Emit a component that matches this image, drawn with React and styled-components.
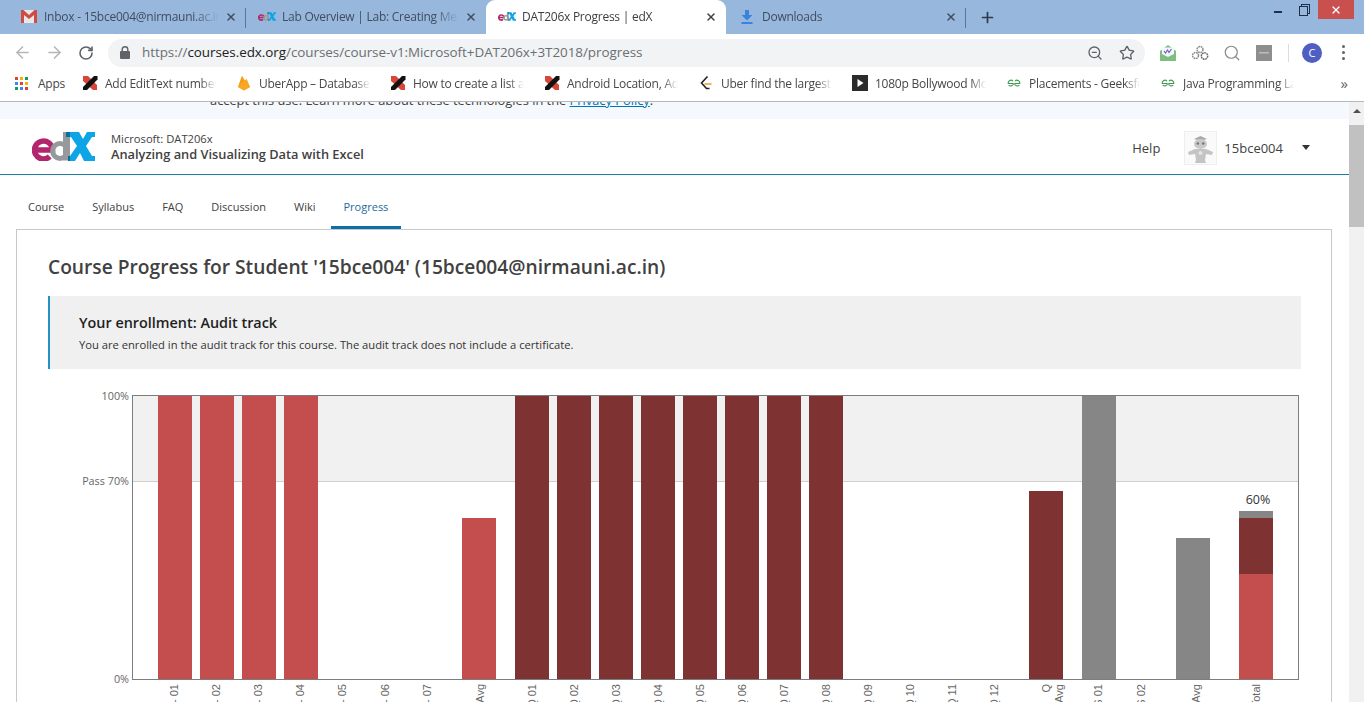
import React from 'react';
import styled, { createGlobalStyle } from 'styled-components';
import { ArrowLeft, ArrowRight, RotateCw, ZoomOut, Star, Plus, X, Search } from 'lucide-react';

const Global = createGlobalStyle`
  html, body { margin: 0; padding: 0; height: 100%; overflow: hidden; background: #fff; }
  * { box-sizing: border-box; }
`

const Window = styled.div`
  width: 1364px;
  height: 702px;
  display: flex;
  flex-direction: column;
  overflow: hidden;
  font-family: "Open Sans", "Noto Sans", sans-serif;
`

/* browser chrome */
const TabStrip = styled.div`
  height: 34px;
  flex: none;
  background: #97b7dc;
  display: flex;
  padding-left: 6px;
  position: relative;
`
const Tab = styled.div`
  width: 240px;
  height: 34px;
  display: flex;
  align-items: center;
  gap: 6px;
  padding: 0 10px 1px ${p => p.$inset || 12}px;
  background: ${p => p.$active ? '#fff' : 'transparent'};
  border-radius: 9px 9px 0 0;
  color: ${p => p.$active ? '#3c4043' : '#414d5e'};
  position: relative;
  &::after {
    content: '';
    display: ${p => p.$sep ? 'block' : 'none'};
    position: absolute;
    right: 0;
    top: 8px;
    height: 20px;
    width: 1px;
    background: #5f7690;
  }
`
const TabIcon = styled.span`
  width: 18px;
  height: 18px;
  flex: none;
  display: flex;
  align-items: center;
  justify-content: center;
`
const FadeText = styled.span`
  flex: 1;
  min-width: 0;
  white-space: nowrap;
  overflow: hidden;
  font-size: 12px;
  font-family: "Open Sans", sans-serif;
  letter-spacing: -0.25px;
  -webkit-mask-image: linear-gradient(to right, #000 86%, transparent 100%);
  mask-image: linear-gradient(to right, #000 86%, transparent 100%);
`
const TabClose = styled(X)`
  flex: none;
  width: 12px;
  height: 12px;
  margin-right: -1px;
  stroke-width: 3;
`
const NewTab = styled.div`
  width: 42px;
  display: flex;
  align-items: center;
  justify-content: center;
  color: #2f3b4c;
`
const WindowControls = styled.div`
  margin-left: auto;
  display: flex;
  align-items: flex-start;
  padding-right: 10px;
`
const MinButton = styled.div`
  width: 8px;
  height: 2px;
  background: #1f2f49;
  margin: 11px 17px 0 0;
`
const RestoreButton = styled.div`
  width: 9px;
  height: 10px;
  margin: 6px 10px 0 0;
  border: 1px solid #1f2f49;
  box-shadow: 2px -2px 0 -1px #97b7dc, 2px -2px 0 0 #1f2f49;
`
const CloseButton = styled.div`
  width: 36px;
  height: 19px;
  background: #c8504f;
  color: #fff;
  display: flex;
  align-items: center;
  justify-content: center;
`
const Toolbar = styled.div`
  height: 33px;
  flex: none;
  background: #fff;
  display: flex;
  align-items: center;
  padding-top: 4px;
`
const NavButton = styled.div`
  width: 32px;
  display: flex;
  justify-content: center;
  color: ${p => p.$on ? '#5f6368' : '#b4b6b9'};
  margin-left: ${p => p.$first ? '6px' : 0};
`
const Omnibox = styled.div`
  width: 1037px;
  height: 28px;
  margin-left: 6px;
  background: #f1f3f4;
  border-radius: 14px;
  display: flex;
  align-items: center;
  padding: 0 2px 0 12px;
  color: #5f6368;
`
const Url = styled.div`
  flex: 1;
  margin: 0 0 1px 12px;
  font-size: 13.45px;
  letter-spacing: -0.05px;
  color: #6b6f73;
  white-space: nowrap;
  b { font-weight: 400; color: #202124; }
`
const OmniIcon = styled.div`
  width: 32px;
  display: flex;
  justify-content: center;
  color: #5f6368;
`
const ExtensionBar = styled.div`
  display: flex;
  align-items: center;
  margin-left: 7px;
`
const Ext = styled.div`
  width: 32px;
  display: flex;
  justify-content: center;
`
const ExtSep = styled.div`
  width: 1px;
  height: 18px;
  background: #dadce0;
  margin: 0 7px 0 8px;
`
const Avatar = styled.div`
  width: 20px;
  height: 20px;
  border-radius: 50%;
  background: #4f5fc1;
  color: #fff;
  font-size: 11px;
  display: flex;
  align-items: center;
  justify-content: center;
  margin: 0 11px 0 6px;
`
const Dots = styled.div`
  display: flex;
  flex-direction: column;
  gap: 3px;
  margin-left: 9px;
  span { width: 3px; height: 3px; border-radius: 50%; background: #5f6368; }
`
const Bookmarks = styled.div`
  height: 35px;
  flex: none;
  background: #fff;
  border-bottom: 1px solid #b7b7b7;
  display: flex;
  align-items: center;
  padding: 0 0 2px 15px;
  position: relative;
  color: #474747;
`
const Apps = styled.div`
  width: 67px;
  display: flex;
  align-items: center;
  gap: 10px;
  font-size: 12px;
  letter-spacing: -0.25px;
`
const AppGrid = styled.div`
  width: 13px;
  display: grid;
  grid-template-columns: repeat(3, 3px);
  gap: 2px;
`
const AppDot = styled.i`
  width: 3px;
  height: 3px;
  background: ${p => p.$c};
`
const Bookmark = styled.div`
  width: 154px;
  display: flex;
  align-items: center;
  gap: 7px;
  padding-right: 20px;
  flex: none;
`
const BookmarkIcon = styled.span`
  width: 16px;
  height: 16px;
  flex: none;
  display: flex;
`
const More = styled.div`
  margin-left: auto;
  margin-right: 16px;
  font-size: 15px;
  color: #5f6368;
`

/* page */
const Viewport = styled.div`
  flex: 1;
  min-height: 0;
  display: flex;
`
const Page = styled.div`
  flex: 1;
  min-width: 0;
  background: #fff;
  overflow: hidden;
`
const CookieBar = styled.div`
  height: 17px;
  background: #f5f8fd;
  overflow: hidden;
  padding-left: 210px;
  font-size: 12.83px;
  line-height: 18px;
  color: #414141;
  p { margin: -11px 0 0; }
  a { color: #0075b4; text-decoration: underline; }
`
const Header = styled.header`
  height: 56px;
  display: flex;
  align-items: center;
  padding: 0 39px 0 32px;
  border-bottom: 1px solid #1f7ca5;
`
const CourseInfo = styled.div`
  margin-left: 16px;
  color: #414141;
`
const Org = styled.div`
  font-size: 11.2px;
  line-height: 15px;
`
const CourseName = styled.div`
  font-size: 12.8px;
  line-height: 17px;
  font-weight: 600;
`
const HeaderRight = styled.div`
  margin-left: auto;
  padding-top: 2px;
  display: flex;
  align-items: center;
  font-size: 13px;
  color: #414141;
`
const UserPic = styled.div`
  width: 33px;
  height: 34px;
  margin: 0 7px 0 24px;
  border: 1px solid #eee;
  display: flex;
`
const Caret = styled.div`
  width: 0;
  height: 0;
  margin-left: 19px;
  border-left: 4px solid transparent;
  border-right: 4px solid transparent;
  border-top: 5px solid #333;
`
const CourseNav = styled.nav`
  height: 54px;
  display: flex;
  padding-left: 15px;
  gap: 2px;
`
const NavItem = styled.div`
  padding: 11px 13px 0;
  height: 54px;
  display: flex;
  align-items: center;
  font-size: 11px;
  color: ${p => p.$active ? '#1c6b9c' : '#414141'};
  border-bottom: 3px solid ${p => p.$active ? '#0f6ea8' : 'transparent'};
`
const Card = styled.section`
  margin: 0 17px 0 16px;
  border: 1px solid #c8c8c8;
  padding: 0 30px 0 31px;
  height: 600px;
`
const Title = styled.h1`
  margin: 25px 0 0;
  font-size: 19.2px;
  line-height: 24px;
  font-weight: 600;
  color: #414141;
`
const Notice = styled.div`
  margin-top: 17px;
  height: 73px;
  background: #f0f0f0;
  border-left: 2px solid #2490c4;
  padding: 18px 29px;
  color: #1f1f1f;
`
const NoticeTitle = styled.div`
  font-size: 14.4px;
  line-height: 18px;
  font-weight: 600;
`
const NoticeText = styled.div`
  margin-top: 6px;
  font-size: 11.2px;
  line-height: 14px;
  color: #333;
`
const Chart = styled.svg`
  display: block;
  margin-top: 16px;
  overflow: hidden;
`
const Scrollbar = styled.div`
  width: 15px;
  flex: none;
  background: #f1f1f1;
  display: flex;
  flex-direction: column;
`
const ScrollUp = styled.div`
  height: 23px;
  display: flex;
  justify-content: center;
  padding-top: 7px;
  &::before {
    content: '';
    height: 0;
    border-left: 4px solid transparent;
    border-right: 4px solid transparent;
    border-bottom: 4px solid #505050;
  }
`
const ScrollThumb = styled.div`
  height: 102px;
  background: #c1c1c1;
`

const RED = '#c44e4e'
const DARK = '#7f3232'
const GREY = '#868686'

const bars = [
  { x: 158, top: 396, c: RED }, { x: 200, top: 396, c: RED }, { x: 242, top: 396, c: RED }, { x: 284, top: 396, c: RED },
  { x: 462, top: 518, c: RED },
  ...[515, 557, 599, 641, 683, 725, 767, 809].map(x => ({ x, top: 396, c: DARK })),
  { x: 1029, top: 491, c: DARK },
  { x: 1082, top: 396, c: GREY },
  { x: 1176, top: 538, c: GREY },
]

const ticks = [
  [174, 'Lab - 01'], [216, 'Lab - 02'], [258, 'Lab - 03'], [300, 'Lab - 04'], [342, 'Lab - 05'], [385, 'Lab - 06'], [427, 'Lab - 07'],
  [480, 'Lab Avg'],
  [532, 'Q 01'], [574, 'Q 02'], [616, 'Q 03'], [658, 'Q 04'], [700, 'Q 05'], [742, 'Q 06'], [784, 'Q 07'], [826, 'Q 08'],
  [868, 'Q 09'], [910, 'Q 10'], [952, 'Q 11'], [994, 'Q 12'],
  [1046, 'Q'], [1059, 'Avg'],
  [1098, 'S 01'], [1141, 'S 02'], [1196, 'Avg'], [1256, 'Total'],
]

function ProgressChart() {
  return (
    <Chart width="1253" height="320" viewBox="48 385 1253 320" fontFamily="'Open Sans', sans-serif">
      <rect x="133" y="396" width="1165" height="85" fill="#f1f1f1" />
      <line x1="133" x2="1298" y1="481.5" y2="481.5" stroke="#cfcfcf" />
      {bars.map(b => <rect key={b.x} x={b.x} y={b.top} width="34" height={679 - b.top} fill={b.c} />)}
      <rect x="1239" y="511" width="34" height="7" fill={GREY} />
      <rect x="1239" y="518" width="34" height="56" fill={DARK} />
      <rect x="1239" y="574" width="34" height="105" fill={RED} />
      <rect x="132.500" y="395.500" width="1166" height="284" fill="none" stroke="#7d7d7d" />
      <g fontSize="10.8" fill="#666" textAnchor="end">
        <text x="129" y="400">100%</text>
        <text x="129" y="485">Pass 70%</text>
        <text x="129" y="683">0%</text>
      </g>
      <text x="1258" y="504" fontSize="12.500" fill="#333" textAnchor="middle">60%</text>
      <g fontSize="11" fill="#666" fontFamily="'Liberation Sans', sans-serif" textAnchor="end">
        {ticks.map(([x, label]) => (
          <text key={x} transform={`translate(${x + 4} 684) rotate(-90)`}>{label}</text>
        ))}
      </g>
    </Chart>
  )
}

function EdxLogo({ width = 63, height = 29 }) {
  return (
    <svg width={width} height={height} viewBox="0 0 63 29">
      <path d="M3 18h17.500a9 9 0 1 0-2.800 6.600" fill="none" stroke="#b3266c" strokeWidth="5.500" />
      <circle cx="28" cy="19" r="7.400" fill="none" stroke="#979a9c" strokeWidth="5" />
      <rect x="31" y="0" width="7" height="28.500" fill="#979a9c" />
      <path d="M34 0h13l4 7 4-7h8v5h-3l-6 9 6 10h3v5H52l-4-8-5 8h-7v-5h2l7-10-6-9h-5z" fill="#0ea5e6" />
      <path d="M34 0h4v5h-4zM36 24h2v5h-2z" fill="#0a6f9f" />
    </svg>
  )
}

const GmailIcon = () => (
  <svg width="16" height="13" viewBox="0 0 16 13">
    <rect width="16" height="13" fill="#e8e8e8" />
    <path d="M0 0h2.500L8 5 13.500 0H16v13h-3V5L8 9 3 5v8H0z" fill="#cf4b43" />
  </svg>
)

const XMark = () => (
  <svg width="16" height="16" viewBox="0 0 16 16">
    <path d="M1 1h5l9 9v5h-4L1 6z" fill="#d8453a" />
    <path d="M1 12L12 1h3.500v3.500L5 15H1z" fill="#111" />
  </svg>
)

const Firebase = () => (
  <svg width="16" height="16" viewBox="0 0 16 16">
    <path d="M2 12L6 1l3 5 1.500-2L14 12l-6 3.500z" fill="#fbbc2a" />
    <path d="M2 12L6 1l3 5z" fill="#f79a1e" />
    <path d="M8 15.500L2 12l8.500-8L14 12z" fill="#f9a825" />
  </svg>
)

const LeetCode = () => (
  <svg width="16" height="16" viewBox="0 0 16 16" fill="none" strokeWidth="1.600">
    <path d="M9.500 1.500L3.500 8l5 5.500h3" stroke="#222" />
    <path d="M6.500 9h7" stroke="#e8a33d" />
  </svg>
)

const PlayBox = () => (
  <svg width="16" height="16" viewBox="0 0 16 16">
    <rect width="16" height="16" fill="#2b2b2b" />
    <path d="M5.500 4l6 4-6 4z" fill="#fff" />
  </svg>
)

const Gfg = () => (
  <svg width="16" height="16" viewBox="0 0 16 16" fill="none" stroke="#3f9a4f" strokeWidth="1.100">
    <path d="M7.500 8.500H2.200a2.800 2.800 0 0 1 4.800-2.400M7.500 8.500a2.800 2.800 0 0 1-4.800 1.600" />
    <path d="M8.500 8.500h5.300a2.800 2.800 0 0 0-4.800-2.400M8.500 8.500a2.800 2.800 0 0 0 4.800 1.600" />
  </svg>
)

const LockIcon = () => (
  <svg width="10" height="13" viewBox="0 0 10 13">
    <path d="M2.200 5V3.500a2.800 2.800 0 0 1 5.600 0V5" fill="none" stroke="#5f6368" strokeWidth="1.400" />
    <rect y="5" width="10" height="8" rx="1" fill="#5f6368" />
  </svg>
)

const DownloadIcon = () => (
  <svg width="12" height="14" viewBox="0 0 12 14">
    <path d="M4 0h4v5h3.500L6 10.500.5 5H4z" fill="#3b82e0" />
    <rect x="0.500" y="12" width="11" height="2" fill="#3b82e0" />
  </svg>
)

const MailExt = () => (
  <svg width="18" height="18" viewBox="0 0 18 18">
    <path d="M1 7l8-6 8 6v10H1z" fill="#7dbf7f" />
    <path d="M3 3.500h12V10l-6 3-6-3z" fill="#f4f6fa" />
    <path d="M5 7l1.500 2 2-3 1.500 2.500L12.500 5" fill="none" stroke="#6a5acd" strokeWidth="1.100" />
  </svg>
)

const GearsExt = () => (
  <svg width="18" height="16" viewBox="0 0 18 16" fill="none" stroke="#8a8a8a" strokeWidth="1.500">
    <circle cx="9" cy="4.500" r="3" strokeDasharray="1.800 .6" />
    <circle cx="4.500" cy="10.500" r="3" strokeDasharray="1.800 .6" />
    <circle cx="13.500" cy="11" r="3.200" stroke="#6c6c6c" strokeDasharray="1.800 .6" />
  </svg>
)

const SquareExt = () => (
  <svg width="16" height="16" viewBox="0 0 16 16">
    <rect width="16" height="16" fill="#8e8e8e" />
    <rect x="3" y="7" width="10" height="1.500" fill="#bdbdbd" />
  </svg>
)

const OwlPic = () => (
  <svg width="31" height="32" viewBox="0 0 31 32">
    <rect width="31" height="32" fill="#fafafa" />
    <path d="M9 7l6.500-3L22 7l-6.500 2z" fill="#a9a9a9" />
    <ellipse cx="15.500" cy="12" rx="6.500" ry="5" fill="#c9c9c9" />
    <circle cx="12.800" cy="11.500" r="1.300" fill="#777" />
    <circle cx="18.200" cy="11.500" r="1.300" fill="#777" />
    <path d="M3 20l7-3h11l7 3-1 3-6-1-1 6 1 3H10l1-3-1-6-6 1z" fill="#c4c4c4" />
    <circle cx="15.500" cy="21" r="2" fill="#e4e4e4" />
  </svg>
)

const appColors = ['#db4437', '#f4b400', '#0f9d58', '#4285f4', '#db4437', '#f4b400', '#0f9d58', '#4285f4', '#db4437']

const bookmarks = [
  [<XMark />, 'Add EditText number dynamically'],
  [<Firebase />, 'UberApp – Database – Firebase'],
  [<XMark />, 'How to create a list and show'],
  [<XMark />, 'Android Location, Address'],
  [<LeetCode />, 'Uber find the largest value'],
  [<PlayBox />, '1080p Bollywood Movies online'],
  [<Gfg />, 'Placements - GeeksforGeeks'],
  [<Gfg />, 'Java Programming Language'],
]

const navItems = ['Course', 'Syllabus', 'FAQ', 'Discussion', 'Wiki', 'Progress']

export default function App() {
  return (
    <Window>
      <Global />
      <TabStrip>
        <Tab $inset={14} $sep>
          <TabIcon><GmailIcon /></TabIcon>
          <FadeText>Inbox - 15bce004@nirmauni.ac.in - Nirma University</FadeText>
          <TabClose />
        </Tab>
        <Tab>
          <TabIcon><EdxLogo width={18} height={9} /></TabIcon>
          <FadeText>Lab Overview | Lab: Creating Measures</FadeText>
          <TabClose />
        </Tab>
        <Tab $active>
          <TabIcon><EdxLogo width={18} height={9} /></TabIcon>
          <FadeText>DAT206x Progress | edX</FadeText>
          <TabClose />
        </Tab>
        <Tab $sep>
          <TabIcon><DownloadIcon /></TabIcon>
          <FadeText>Downloads</FadeText>
          <TabClose />
        </Tab>
        <NewTab><Plus size={17} strokeWidth={2.4} /></NewTab>
        <WindowControls>
          <MinButton />
          <RestoreButton />
          <CloseButton><X size={12} strokeWidth={2.6} /></CloseButton>
        </WindowControls>
      </TabStrip>

      <Toolbar>
        <NavButton $first><ArrowLeft size={19} strokeWidth={2} /></NavButton>
        <NavButton><ArrowRight size={19} strokeWidth={2} /></NavButton>
        <NavButton $on><RotateCw size={16} strokeWidth={2.4} /></NavButton>
        <Omnibox>
          <LockIcon />
          <Url>https://<b>courses.edx.org</b>/courses/course-v1:Microsoft+DAT206x+3T2018/progress</Url>
          <OmniIcon><ZoomOut size={16} strokeWidth={2} /></OmniIcon>
          <OmniIcon><Star size={16} strokeWidth={2} /></OmniIcon>
        </Omnibox>
        <ExtensionBar>
          <Ext><MailExt /></Ext>
          <Ext><GearsExt /></Ext>
          <Ext><Search size={18} color="#8a8a8a" strokeWidth={1.6} /></Ext>
          <Ext><SquareExt /></Ext>
          <ExtSep />
          <Avatar>C</Avatar>
          <Dots><span /><span /><span /></Dots>
        </ExtensionBar>
      </Toolbar>

      <Bookmarks>
        <Apps>
          <AppGrid>{appColors.map((c, i) => <AppDot key={i} $c={c} />)}</AppGrid>
          Apps
        </Apps>
        {bookmarks.map(([icon, label], i) => (
          <Bookmark key={i}>
            <BookmarkIcon>{icon}</BookmarkIcon>
            <FadeText>{label}</FadeText>
          </Bookmark>
        ))}
        <More>»</More>
      </Bookmarks>

      <Viewport>
        <Page>
          <CookieBar>
            <p>accept this use. Learn more about these technologies in the <a>Privacy Policy</a>.</p>
          </CookieBar>
          <Header>
            <EdxLogo />
            <CourseInfo>
              <Org>Microsoft: DAT206x</Org>
              <CourseName>Analyzing and Visualizing Data with Excel</CourseName>
            </CourseInfo>
            <HeaderRight>
              Help
              <UserPic><OwlPic /></UserPic>
              15bce004
              <Caret />
            </HeaderRight>
          </Header>
          <CourseNav>
            {navItems.map(n => <NavItem key={n} $active={n === 'Progress'}>{n}</NavItem>)}
          </CourseNav>
          <Card>
            <Title>Course Progress for Student '15bce004' (15bce004@nirmauni.ac.in)</Title>
            <Notice>
              <NoticeTitle>Your enrollment: Audit track</NoticeTitle>
              <NoticeText>You are enrolled in the audit track for this course. The audit track does not include a certificate.</NoticeText>
            </Notice>
            <ProgressChart />
          </Card>
        </Page>
        <Scrollbar>
          <ScrollUp />
          <ScrollThumb />
        </Scrollbar>
      </Viewport>
    </Window>
  )
}
